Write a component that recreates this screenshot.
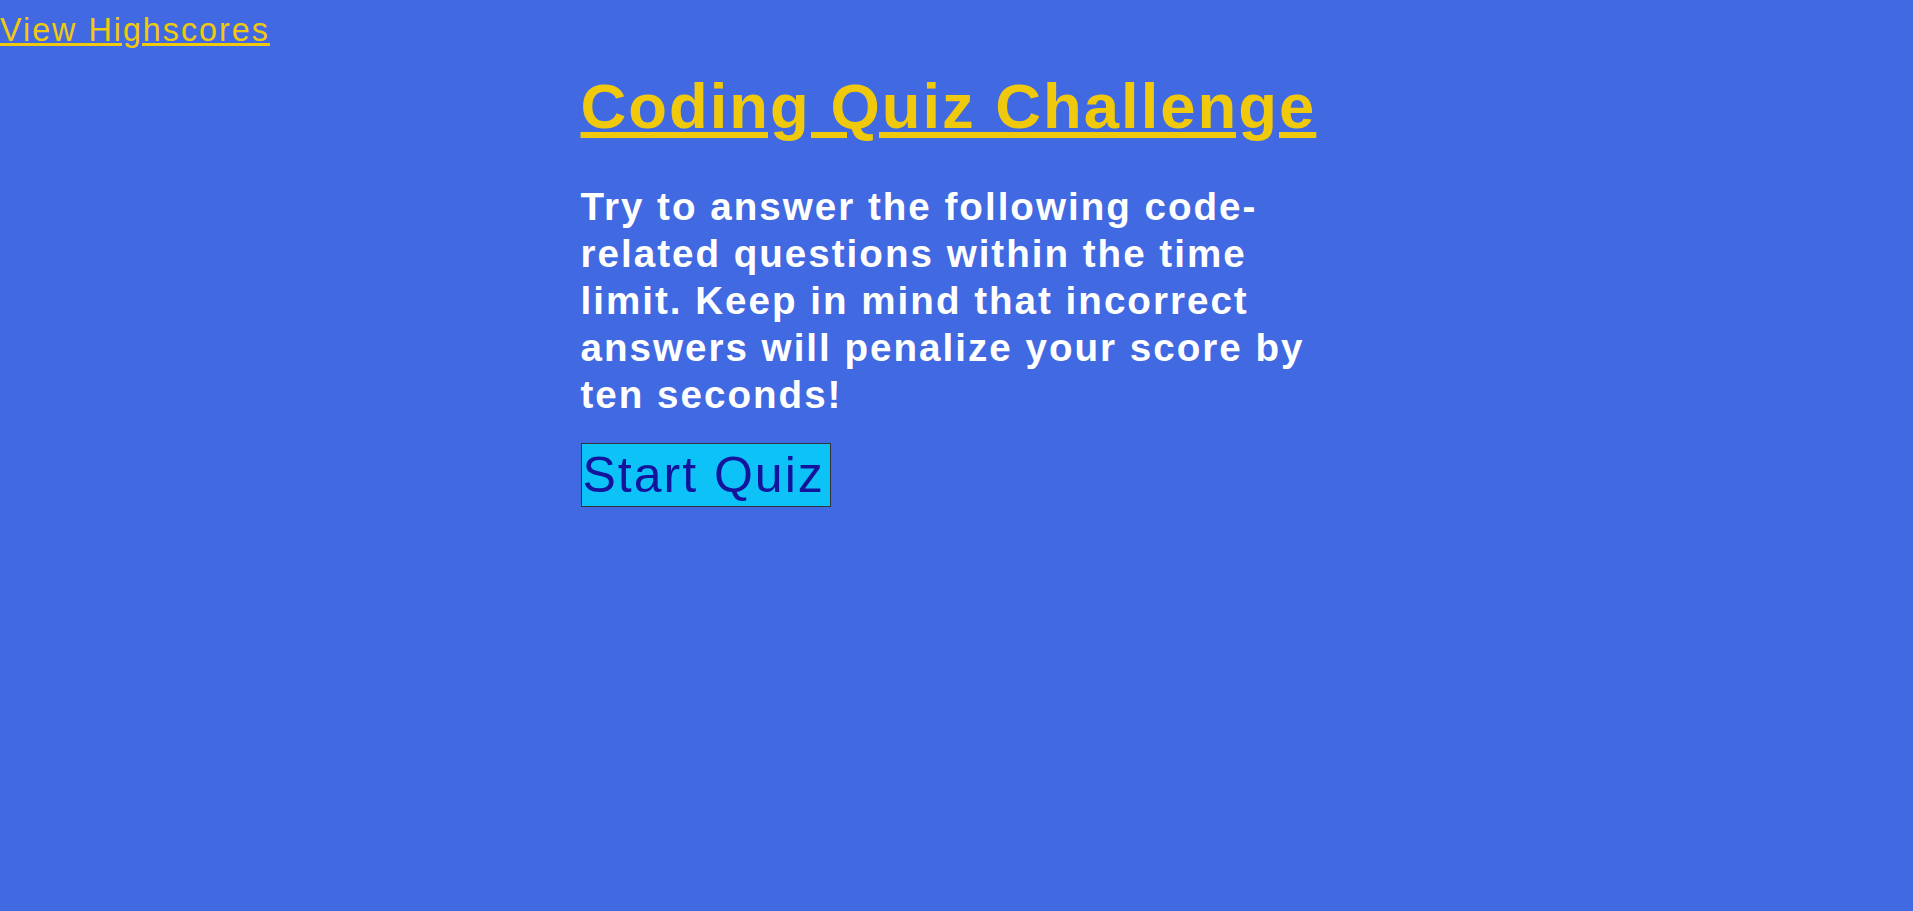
export default function App() {
  return (
    <div className="min-h-[911px] w-full bg-[#4169e1] font-['Liberation_Sans',Arial,sans-serif] tracking-[2px]">
      <header className="pt-[12px]">
        <a href="#" className="text-[32.3px] leading-[37px] text-[#f1c90c] underline">
          View Highscores
        </a>
      </header>
      <main className="mx-auto w-[752px] pt-[20px]">
        <h1 className="text-[63.4px] leading-[74px] font-bold text-[#f1c90c] underline">
          Coding Quiz Challenge
        </h1>
        <p className="mt-[40px] text-[38.6px] leading-[47px] font-bold text-white">
          Try to answer the following code-related questions within the time limit. Keep in mind that incorrect answers will penalize your score by ten seconds!
        </p>
        <button className="mt-[25px] border border-[#333] bg-[#0cc2f7] pl-[1px] pr-[5px] py-[2px] text-[50px] leading-[58px] text-[#13139c]">
          Start Quiz
        </button>
      </main>
    </div>
  );
}
